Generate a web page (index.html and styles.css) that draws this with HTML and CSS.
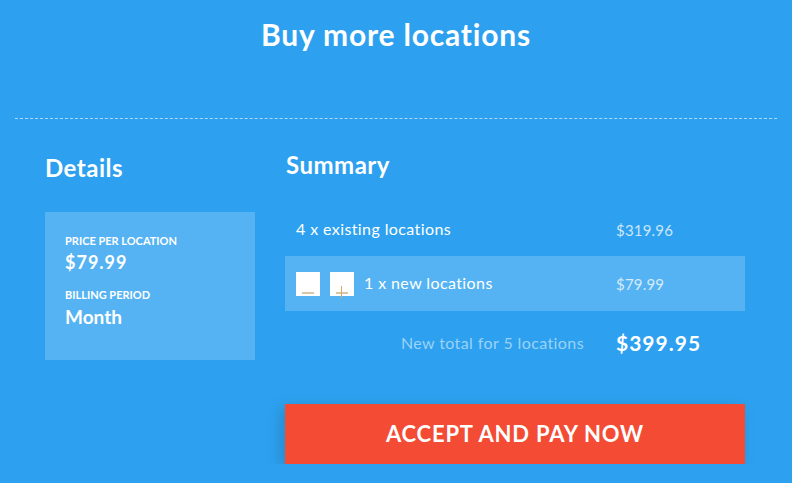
FILE: index.html
```html
<!DOCTYPE html>
<html lang="en">
<head>
    <meta charset="UTF-8">
    <title>Buy more locations</title>
    <link rel="stylesheet" href="styles.css">
</head>
<body>
    <div class="header">
        <h1 class="baslik">Buy more locations</h1>
    </div>
    <hr class="ayirac">

    <div class="icerik">
        <div class="detaylar">
            <h2 class="kolon-baslik">Details</h2>
            <div class="detay-kutu">
                <div class="etiket">PRICE PER LOCATION</div>
                <div class="deger deger-fiyat">$79.99</div>
                <div class="etiket etiket-alt">BILLING PERIOD</div>
                <div class="deger deger-ay">Month</div>
            </div>
        </div>

        <div class="ozet">
            <h2 class="kolon-baslik ozet-baslik">Summary</h2>
            <div class="satir">
                <span class="satir-metin">4 x existing locations</span>
                <span class="fiyat">$319.96</span>
            </div>
            <div class="satir satir-yeni">
                <span class="satir-metin">
                    <button class="adet-btn"><span class="eksi"></span></button>
                    <button class="adet-btn"><span class="arti"></span></button>
                    1 x new locations
                </span>
                <span class="fiyat">$79.99</span>
            </div>
            <div class="satir satir-toplam">
                <span class="toplam-metin">New total for 5 locations</span>
                <span class="toplam-fiyat">$399.95</span>
            </div>
            <button class="ode-btn">ACCEPT AND PAY NOW</button>
        </div>
    </div>
</body>
</html>
```

FILE: styles.css
```css
html, body {
    margin: 0;
    background-color: #2da1ef;
    color: #fff;
    font-family: "Lato", "Open Sans", sans-serif;
}

.header {
    padding-top: 17px;
    text-align: center;
}

.baslik {
    margin: 0;
    font-size: 30px;
    line-height: 34px;
    font-weight: 700;
    letter-spacing: 0.8px;
}

.ayirac {
    margin: 67px 15px 0 15px;
    border: none;
    border-top: 1px dashed rgba(255, 255, 255, 0.6);
    height: 0;
}

.icerik {
    display: flex;
    padding-left: 45px;
}

.detaylar {
    width: 210px;
    margin-right: 30px;
}

.kolon-baslik {
    margin: 35px 0 0 0;
    font-size: 24px;
    line-height: 28px;
    font-weight: 700;
    letter-spacing: 0.5px;
}

.ozet-baslik {
    margin-top: 32px;
    margin-left: 1px;
}

.detay-kutu {
    margin-top: 30px;
    height: 148px;
    box-sizing: border-box;
    padding: 22px 20px;
    background: #55b3f3;
}

.etiket {
    font-size: 11px;
    font-weight: 700;
    line-height: 14px;
}

.etiket-alt {
    margin-top: 15px;
}

.deger {
    font-size: 18px;
    font-weight: 700;
    line-height: 22px;
    letter-spacing: 1px;
}

.deger-fiyat {
    margin-top: 3px;
}

.deger-ay {
    margin-top: 2px;
    font-size: 19px;
    line-height: 26px;
    letter-spacing: 0;
}

.ozet {
    width: 460px;
}

.satir {
    display: grid;
    grid-template-columns: 1fr 129px;
    align-items: center;
    height: 48px;
    margin-top: 27px;
    padding-left: 11px;
    font-size: 16px;
    letter-spacing: 0.4px;
}

.satir-yeni {
    height: 55px;
    margin-top: 2px;
    background: #55b3f3;
}

.satir-metin {
    display: flex;
    align-items: center;
    padding-bottom: 3px;
}

.fiyat {
    font-size: 15px;
    letter-spacing: 0.2px;
    color: rgba(255, 255, 255, 0.75);
}

.adet-btn {
    position: relative;
    width: 24px;
    height: 24px;
    margin: 3px 10px 0 0;
    padding: 0;
    border: none;
    background: #fff;
    cursor: pointer;
}

.eksi, .arti {
    position: absolute;
    left: 6px;
    bottom: 2px;
    width: 12px;
    height: 2px;
    background: #dcc6a8;
}

.arti::after {
    content: "";
    position: absolute;
    left: 5px;
    top: -6px;
    width: 1px;
    height: 12px;
    background: #e0a562;
}

.satir-toplam {
    height: 62px;
    margin-top: 0;
}

.toplam-metin {
    justify-self: end;
    padding-right: 32px;
    color: #9bd2f8;
}

.toplam-fiyat {
    font-size: 21px;
    font-weight: 700;
    letter-spacing: 1px;
}

.ode-btn {
    display: block;
    width: 460px;
    height: 60px;
    margin-top: 31px;
    padding-bottom: 3px;
    border: none;
    background: #f44b35;
    color: #fff;
    font-family: "Lato", "Open Sans", sans-serif;
    font-size: 22px;
    font-weight: 700;
    letter-spacing: 0.8px;
    box-shadow: -4px 4px 14px rgba(0, 0, 0, 0.15);
    cursor: pointer;
}
```
